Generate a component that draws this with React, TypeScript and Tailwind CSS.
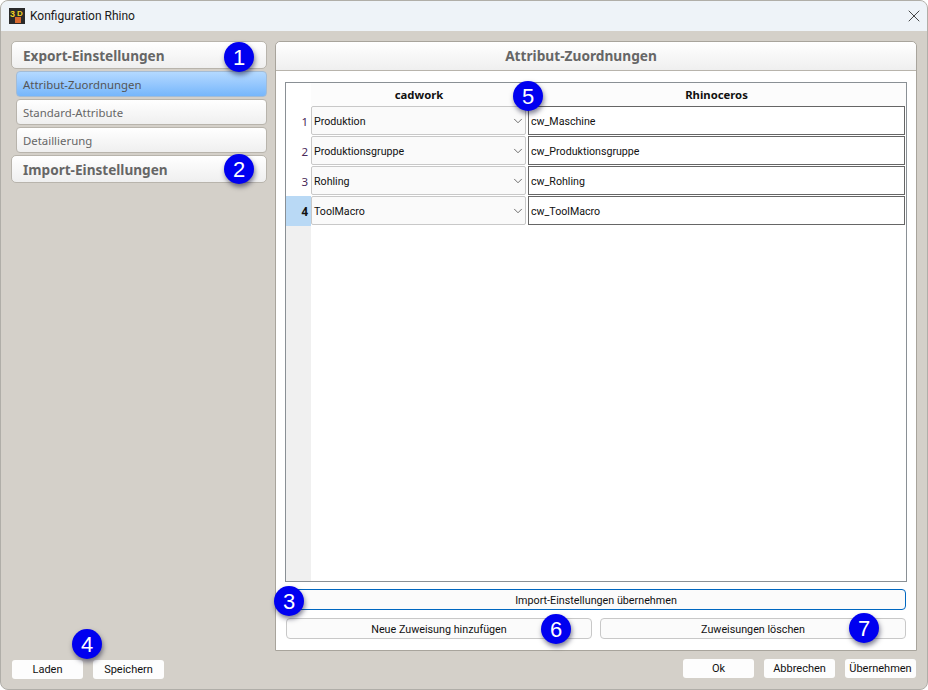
import { ChevronDown, X } from "lucide-react";

const font = "font-['Noto_Sans','Open_Sans',sans-serif]";
const ui = "font-['Roboto',sans-serif]";

const rows = [
  { id: 1, attr: "Produktion", target: "cw_Maschine" },
  { id: 2, attr: "Produktionsgruppe", target: "cw_Produktionsgruppe" },
  { id: 3, attr: "Rohling", target: "cw_Rohling" },
  { id: 4, attr: "ToolMacro", target: "cw_ToolMacro" },
];

const badges = [
  { n: 1, cls: "left-[223px] top-[41px]" },
  { n: 2, cls: "left-[223px] top-[153px]" },
  { n: 3, cls: "left-[273px] top-[585px]" },
  { n: 4, cls: "left-[71px] top-[628px]" },
  { n: 5, cls: "left-[512px] top-[80px]" },
  { n: 6, cls: "left-[540px] top-[613px]" },
  { n: 7, cls: "left-[848px] top-[612px]" },
];

const Badge = ({ n, cls }: { n: number; cls: string }) => (
  <div
    className={`absolute ${cls} flex h-[30px] w-[30px] items-center justify-center rounded-full bg-[#0000f0] font-['Liberation_Sans',sans-serif] text-[22px] text-white shadow-[1px_3px_5px_rgba(0,0,40,0.5)]`}
  >
    {n}
  </div>
);

const SectionHeader = ({ label }: { label: string }) => (
  <div className="flex h-[28px] items-center rounded-[5px] border border-[#b8b4ac] bg-gradient-to-b from-white to-[#efefef] pl-[11px] pt-[2px] text-[13.6px] font-bold text-[#666]">
    {label}
  </div>
);

const NavItem = ({ label, active }: { label: string; active?: boolean }) => (
  <div
    className={`ml-[5px] flex h-[26px] items-center rounded-[4px] border pl-[6px] pt-[2px] text-[11.4px] ${
      active
        ? "border-[#a3bcd6] bg-gradient-to-b from-[#b4d9ff] to-[#76b6fb] text-[#555]"
        : "border-[#b8b4ac] bg-gradient-to-b from-white to-[#efefef] text-[#666]"
    }`}
  >
    {label}
  </div>
);

const Btn = ({ label, className = "" }: { label: string; className?: string }) => (
  <button
    className={`flex h-[19px] w-[71px] items-center justify-center rounded-[3px] bg-[#fdfdfd] pt-[2px] text-[11px] text-[#111] ${ui} ${className}`}
  >
    {label}
  </button>
);

const WideBtn = ({ label, className = "" }: { label: string; className?: string }) => (
  <button
    className={`flex h-[21px] items-center justify-center rounded-[4px] border bg-[#fbfbfb] pt-[3px] text-[10.75px] text-[#111] ${ui} ${className}`}
  >
    {label}
  </button>
);

export default function App() {
  return (
    <div className={`relative flex h-[690px] w-[928px] flex-col overflow-hidden rounded-[8px] border border-[#b0aea8] bg-[#d4d0c9] ${font}`}>
      <div className="flex h-[30px] shrink-0 items-center bg-[#eef3f8] pl-[8px] pr-[3px]">
        <svg width="16" height="16" viewBox="0 0 16 16" className="mr-[5px]">
          <rect width="16" height="16" fill="#2a2a2a" />
          <text x="1" y="9" fontSize="9" fontWeight="700" fill="#f0d020" fontFamily="Liberation Sans">3</text>
          <text x="8" y="8" fontSize="8" fontWeight="700" fill="#f0d020" fontFamily="Liberation Sans">D</text>
          <rect x="6" y="9" width="6" height="6" fill="#d86a30" />
        </svg>
        <span className={`text-[12px] text-[#1a1a1a] ${ui}`}>Konfiguration Rhino</span>
        <X className="ml-auto text-[#222]" size={20} strokeWidth={1} />
      </div>

      <div className="flex min-h-0 flex-1 gap-[8px] pl-[10px] pr-[10px] pt-[10px]">
        <div className="flex w-[256px] shrink-0 flex-col">
          <SectionHeader label="Export-Einstellungen" />
          <div className="mt-[2px] flex flex-col gap-[2px]">
            <NavItem label="Attribut-Zuordnungen" active />
            <NavItem label="Standard-Attribute" />
            <NavItem label="Detaillierung" />
          </div>
          <div className="mt-[2px]">
            <SectionHeader label="Import-Einstellungen" />
          </div>
          <div className="mt-auto mb-[10px] ml-[1px] flex gap-[10px]">
            <Btn label="Laden" />
            <Btn label="Speichern" />
          </div>
        </div>

        <div className="flex min-w-0 flex-1 flex-col">
          <div className="flex h-[610px] flex-col rounded-t-[5px] border border-[#a8a49c] bg-white">
            <div className="flex h-[29px] shrink-0 items-center justify-center rounded-t-[5px] border-b border-[#b8b4ac] bg-gradient-to-b from-white to-[#efefef] pr-[30px] text-[13.7px] font-bold text-[#666]">
              Attribut-Zuordnungen
            </div>
            <div className="flex flex-1 flex-col px-[9px] pt-[11px]">
              <div className="flex h-[500px] border border-[#8a9095] bg-white">
                <div className="flex w-[25px] shrink-0 flex-col bg-[#f0f0f0]">
                  <div className="h-[23px] bg-white" />
                  {rows.map((r) => (
                    <div
                      key={r.id}
                      className={`flex h-[30px] items-center justify-end pr-[3px] pt-[1px] text-[11.5px] ${
                        r.id === 4 ? "bg-[#b9d9f5] font-bold text-[#111]" : "bg-white text-[#4a2a5a]"
                      }`}
                    >
                      {r.id}
                    </div>
                  ))}
                </div>
                <div className="flex min-w-0 flex-1 flex-col">
                  <div className="flex h-[23px] shrink-0 bg-[#fcfcfc] pt-[2px] text-[11.3px] font-bold text-[#111]">
                    <div className="flex w-[216px] items-center justify-center">cadwork</div>
                    <div className="flex flex-1 items-center justify-center">Rhinoceros</div>
                  </div>
                  {rows.map((r) => (
                    <div key={r.id} className={`flex h-[30px] shrink-0 gap-[2px] pb-[1px] text-[10.65px] text-[#111] ${ui}`}>
                      <div className="flex w-[215px] items-center justify-between rounded-[2px] border border-[#c8c8c8] bg-[#fafafa] pl-[2px]">
                        <span className="pt-[2px]">{r.attr}</span>
                        <ChevronDown size={14} strokeWidth={1.2} className="text-[#333]" />
                      </div>
                      <div className="mr-[1px] flex flex-1 items-center border border-[#666] bg-white pl-[2px] pt-[2px]">
                        {r.target}
                      </div>
                    </div>
                  ))}
                </div>
              </div>
              <WideBtn label="Import-Einstellungen übernehmen" className="mx-[1px] mt-[7px] w-[620px] border-[#0067c0]" />
              <div className="mx-[1px] mt-[8px] flex gap-[8px]">
                <WideBtn label="Neue Zuweisung hinzufügen" className="w-[306px] border-[#c8c8c8]" />
                <WideBtn label="Zuweisungen löschen" className="w-[306px] border-[#c8c8c8]" />
              </div>
            </div>
          </div>
          <div className="mt-[8px] flex justify-end gap-[10px] pr-[1px]">
            <Btn label="Ok" />
            <Btn label="Abbrechen" />
            <Btn label="Übernehmen" />
          </div>
        </div>
      </div>

      {badges.map((b) => (
        <Badge key={b.n} n={b.n} cls={b.cls} />
      ))}
    </div>
  );
}
